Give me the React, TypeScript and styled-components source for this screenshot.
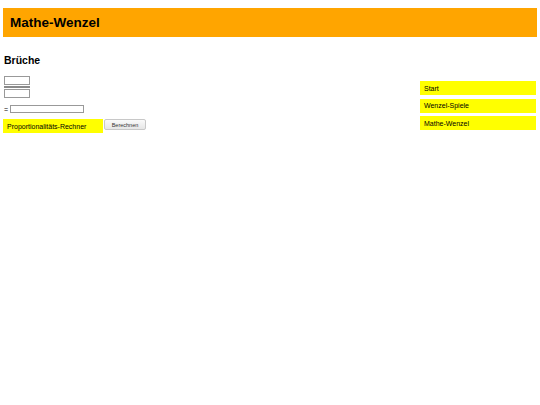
import React from 'react';
import styled, { createGlobalStyle } from 'styled-components';

const GlobalStyle = createGlobalStyle`
  body {
    margin: 0;
    background: #fff;
    font-family: "Liberation Sans", Arial, sans-serif;
    color: #000;
  }
`;

const Page = styled.div`
  padding: 8px 3px 0 3px;
`;

const Header = styled.div`
  background: #ffa500;
  height: 29px;
  display: flex;
  align-items: center;
  padding-left: 7px;

  h1 {
    margin: 0;
    font-size: 13.5px;
    font-weight: bold;
  }
`;

const Content = styled.div`
  display: flex;
  justify-content: space-between;
  align-items: flex-start;
`;

const Main = styled.div`
  padding-left: 1px;
`;

const Title = styled.h2`
  margin: 17px 0 10px 0;
  font-size: 10.5px;
  font-weight: bold;
`;

const Fraction = styled.div`
  display: flex;
  flex-direction: column;
  width: 26px;
  margin-bottom: 7px;
`;

const FracInput = styled.input`
  box-sizing: border-box;
  width: 26px;
  height: 9px;
  padding: 0;
  border: 1px solid #999;
  background: #fff;
`;

const FracLine = styled.div`
  height: 2px;
  margin: 1px 0;
  background: #8a8a8a;
`;

const ResultRow = styled.div`
  display: flex;
  align-items: center;
  gap: 2px;
  font-size: 7px;
  margin-bottom: 6px;
`;

const ResultInput = styled.input`
  box-sizing: border-box;
  width: 74px;
  height: 8px;
  padding: 0;
  border: 1px solid #999;
`;

const ActionRow = styled.div`
  display: flex;
  align-items: flex-start;
  margin-left: -1px;
`;

const Label = styled.div`
  background: #ffff00;
  width: 100px;
  height: 14px;
  box-sizing: border-box;
  padding-left: 4px;
  display: flex;
  align-items: center;
  font-size: 7px;
`;

const Button = styled.button`
  box-sizing: border-box;
  width: 42px;
  height: 11px;
  margin-left: 1px;
  padding: 0;
  font-family: "Liberation Sans", Arial, sans-serif;
  font-size: 5.5px;
  color: #333;
  background: linear-gradient(#fafafa, #e6e6e6);
  border: 1px solid #c8c8c8;
  border-radius: 2px;
`;

const Sidebar = styled.ul`
  list-style: none;
  margin: 44px 1px 0 0;
  padding: 0;
  width: 116px;
  display: flex;
  flex-direction: column;
  gap: 3.5px;
`;

const NavItem = styled.li`
  background: #ffff00;
  height: 14px;
  box-sizing: border-box;
  padding-left: 4px;
  display: flex;
  align-items: center;
  font-size: 7px;
`;

const nav = ['Start', 'Wenzel-Spiele', 'Mathe-Wenzel'];

const App = () => {
  return (
    <>
      <GlobalStyle />
      <Page>
        <Header>
          <h1>Mathe-Wenzel</h1>
        </Header>
        <Content>
          <Main>
            <Title>Brüche</Title>
            <Fraction>
              <FracInput />
              <FracLine />
              <FracInput />
            </Fraction>
            <ResultRow>
              =<ResultInput />
            </ResultRow>
            <ActionRow>
              <Label>Proportionalitäts-Rechner</Label>
              <Button>Berechnen</Button>
            </ActionRow>
          </Main>
          <Sidebar>
            {nav.map((item, i) => (
              <NavItem key={i}>{item}</NavItem>
            ))}
          </Sidebar>
        </Content>
      </Page>
    </>
  );
};

export default App;
